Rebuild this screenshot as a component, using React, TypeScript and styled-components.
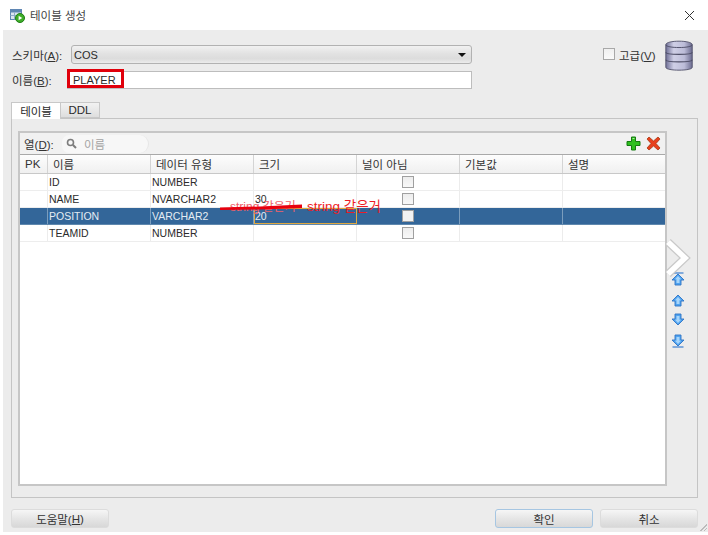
import styled, { createGlobalStyle } from "styled-components";

const GlobalStyle = createGlobalStyle`
  html, body {
    margin: 0;
    padding: 0;
    background: #fff;
  }
  * {
    box-sizing: border-box;
  }
`;

const Root = styled.div`
  position: relative;
  width: 708px;
  height: 535px;
  overflow: hidden;
  background: #fff;
  color: #2b2b2b;
  font-family: "Liberation Sans", "Noto Sans CJK KR", sans-serif;
  font-size: 11px;
`;

const TitleBar = styled.div`
  display: flex;
  align-items: center;
  height: 30px;
  padding: 0 13px 0 10px;
  gap: 5px;
`;

const TitleText = styled.div`
  flex: 1;
  font-size: 11.5px;
  color: #444;
`;

const Body = styled.div`
  display: flex;
  flex-direction: column;
  height: 502px;
  margin-left: 3px;
  padding: 11px 10px 0 8px;
  background: #ececec;
`;

const FormArea = styled.div`
  display: flex;
  height: 58px;
`;

const Fields = styled.div`
  display: flex;
  flex-direction: column;
  gap: 6px;
  padding-top: 4px;
`;

const FieldRow = styled.div`
  display: flex;
  align-items: center;
  height: 19px;
`;

const Label = styled.div`
  width: 60px;
  padding-left: 1px;
  font-size: 11.5px;
  color: #333;
  u {
    text-underline-offset: 1px;
  }
`;

const SelectBox = styled.div`
  display: flex;
  align-items: center;
  justify-content: space-between;
  width: 401px;
  height: 19px;
  padding: 0 5px 0 2px;
  border: 1px solid #b2b2b2;
  border-radius: 3px;
  background: linear-gradient(#f1f1f1, #e2e2e2 45%, #dcdcdc 75%, #ececec);
`;

const Caret = styled.div`
  width: 0;
  height: 0;
  border-left: 4px solid transparent;
  border-right: 4px solid transparent;
  border-top: 4px solid #111;
`;

const TextInput = styled.div`
  display: flex;
  align-items: center;
  width: 405px;
  height: 18px;
  margin-left: -4px;
  padding-left: 5px;
  border: 1px solid #bdbdbd;
  background: #fff;
`;

const AdvancedArea = styled.div`
  display: flex;
  align-items: flex-start;
  margin-left: 131px;
  padding-top: 7px;
`;

const CheckBox = styled.div`
  flex: none;
  width: 12px;
  height: 12px;
  border: 1px solid #a8a8a8;
  background: linear-gradient(#f0f0f0, #fafafa);
`;

const AdvancedLabel = styled.div`
  margin: -1px 8px 0 4px;
  font-size: 11.5px;
  color: #333;
`;

const DatabaseSlot = styled.div`
  margin-top: -8px;
`;

const TabStrip = styled.div`
  display: flex;
  align-items: flex-end;
  height: 19px;
`;

const Tab = styled.div<{ $active?: boolean }>`
  display: flex;
  align-items: center;
  justify-content: center;
  width: ${(p) => (p.$active ? "50px" : "39px")};
  height: ${(p) => (p.$active ? "17px" : "16px")};
  margin-bottom: ${(p) => (p.$active ? "-1px" : "0")};
  border: 1px solid #c8c8c8;
  border-left-width: ${(p) => (p.$active ? "1px" : "0")};
  border-bottom: ${(p) => (p.$active ? "0" : "1px solid #c8c8c8")};
  background: ${(p) => (p.$active ? "#fff" : "linear-gradient(#f2f2f2, #dedede)")};
  font-size: 11.5px;
  position: relative;
  z-index: 1;
`;

const TabPanel = styled.div`
  display: flex;
  height: 380px;
  padding: 12px 0 0 6px;
  border: 1px solid #c4c4c4;
`;

const TablePanel = styled.div`
  display: flex;
  flex-direction: column;
  width: 649px;
  height: 355px;
  border: 2px solid #c6c6c6;
  background: #fff;
`;

const Toolbar = styled.div`
  display: flex;
  flex: none;
  align-items: center;
  height: 22px;
  padding: 0 4px;
  background: #f1f1f1;
  border-bottom: 1px solid #a9a9a9;
`;

const ToolbarLabel = styled.div`
  width: 38px;
  font-size: 11.5px;
  color: #333;
`;

const SearchBox = styled.div`
  display: flex;
  align-items: center;
  gap: 7px;
  width: 87px;
  height: 18px;
  padding-left: 4px;
  background: #f7f7f7;
  border-radius: 7px 9px 9px 7px;
  border-right: 1px solid #e6e6e6;
  color: #a4a4a4;
  font-size: 11.5px;
`;

const ToolbarIcons = styled.div`
  display: flex;
  align-items: center;
  gap: 5px;
  margin-left: auto;
`;

const Row = styled.div<{ $header?: boolean; $selected?: boolean }>`
  display: grid;
  grid-template-columns: 28px 103px 103px 103px 103px 103px 103px;
  height: ${(p) => (p.$header ? "19px" : "17px")};
  flex: none;
  background: ${(p) =>
    p.$header ? "linear-gradient(#fdfdfd, #f0f0f0)" : p.$selected ? "#336699" : "#fff"};
  color: ${(p) => (p.$selected ? "#e4ecf3" : "#2b2b2b")};
  border-bottom: 1px solid ${(p) => (p.$header ? "#c8c8c8" : p.$selected ? "#5f88ae" : "#ededed")};
`;

const Cell = styled.div<{ $center?: boolean }>`
  display: flex;
  align-items: center;
  justify-content: ${(p) => (p.$center ? "center" : "flex-start")};
  padding-left: ${(p) => (p.$center ? "0" : "1px")};
  border-right: 1px solid #ececec;
  font-size: 10.5px;
  white-space: nowrap;
  &:last-child {
    border-right: 0;
  }
`;

const SelectedCell = styled(Cell)`
  border-right-color: #7b9dbd;
`;

const EditingCell = styled(Cell)`
  padding-left: 0;
  border: 1px solid #e0a840;
`;

const HeaderCell = styled(Cell)`
  padding-left: 5px;
  border-right-color: #d4d4d4;
  font-size: 11.5px;
  color: #333;
`;

const RowCheck = styled.div<{ $selected?: boolean }>`
  width: 12px;
  height: 12px;
  border: 1px solid #a0a0a0;
  background: ${(p) => (p.$selected ? "#f2f2f2" : "linear-gradient(#ededed, #f8f8f8)")};
`;

const MoveButtons = styled.div`
  display: flex;
  flex-direction: column;
  gap: 6.5px;
  padding: 141px 0 0 4px;
`;

const Footer = styled.div`
  display: flex;
  align-items: center;
  gap: 7px;
  padding-top: 11px;
`;

const FooterButton = styled.div<{ $primary?: boolean; $push?: boolean }>`
  display: flex;
  flex: none;
  align-items: center;
  justify-content: center;
  width: 98px;
  height: 19px;
  margin-left: ${(p) => (p.$push ? "379px" : "0")};
  border: 1px solid ${(p) => (p.$primary ? "#a6c6e2" : "#dcdcdc")};
  border-radius: 3px;
  background: linear-gradient(#f6f6f6, #e4e4e4 55%, #d8d8d8);
  font-size: 11.5px;
  color: #333;
`;

const ResizeGrip = styled.div`
  position: absolute;
  right: 1px;
  bottom: 4px;
  width: 7px;
  height: 7px;
  background: linear-gradient(135deg, transparent 50%, #bbb 50%, #bbb 60%, transparent 60%, transparent 75%, #bbb 75%, #bbb 85%, transparent 85%);
`;

// annotations drawn over the dialog in the screenshot
const NameHighlight = styled.div`
  position: absolute;
  left: 67px;
  top: 69px;
  width: 57px;
  height: 19px;
  border: 3px solid #e0000b;
`;

const RedNote = styled.div`
  position: absolute;
  left: 307px;
  top: 195px;
  color: #ee1c25;
  font-size: 13.5px;
  white-space: nowrap;
`;

const CrossedNote = styled.div`
  position: absolute;
  left: 230px;
  top: 197px;
  color: #f0606a;
  font-size: 12px;
  white-space: nowrap;
`;

const Overlay = styled.svg`
  position: absolute;
  left: 0;
  top: 0;
  pointer-events: none;
`;

const TableIcon = () => (
  <svg width="15" height="15" viewBox="0 0 15 15">
    <rect x="0.5" y="1.5" width="11" height="10" fill="#dce6f2" stroke="#5f86b3" />
    <rect x="1" y="2" width="10" height="2.5" fill="#5f86b3" />
    <path d="M0.5 7.5h11M4.5 4.5v7" stroke="#8fabc9" />
    <circle cx="10" cy="10" r="4.5" fill="#3fae2a" stroke="#1f7d16" />
    <path d="M8.6 7.7v4.6l3.6-2.3z" fill="#fff" />
  </svg>
);

const CloseIcon = () => (
  <svg width="11" height="11" viewBox="0 0 11 11">
    <path d="M1 1l9 9M10 1l-9 9" stroke="#333" strokeWidth="1" fill="none" />
  </svg>
);

const DatabaseIcon = () => (
  <svg width="31" height="33" viewBox="0 0 31 35">
    <defs>
      <linearGradient id="dbBody" x1="0" x2="1" y1="0" y2="0">
        <stop offset="0" stopColor="#6f6f96" />
        <stop offset="0.3" stopColor="#cfcfe6" />
        <stop offset="0.7" stopColor="#bcbcd8" />
        <stop offset="1" stopColor="#6c6c90" />
      </linearGradient>
    </defs>
    <path d="M1 5c0-5 28-5 28 0v24c0 4-28 4-28 0z" fill="url(#dbBody)" stroke="#55556f" />
    <path d="M1 5c0 4 28 4 28 0" fill="none" stroke="#4f4f68" />
    <path d="M1 13c0 3 28 3 28 0M1 21c0 3 28 3 28 0" fill="none" stroke="#4f4f68" strokeWidth="1.2" />
  </svg>
);

const SearchIcon = () => (
  <svg width="11" height="11" viewBox="0 0 11 11">
    <circle cx="4.5" cy="4.5" r="3" fill="none" stroke="#7d7d7d" strokeWidth="1.6" />
    <path d="M7 7l3 3" stroke="#7d7d7d" strokeWidth="2" />
  </svg>
);

const PlusIcon = () => (
  <svg width="15" height="15" viewBox="0 0 15 15">
    <path d="M5.500 1h4v4.500H14v4H9.500V14h-4V9.500H1v-4h4.500z" fill="#2fbf1f" stroke="#157a10" />
    <path d="M6.500 2.500h2" stroke="#a6ef9a" />
  </svg>
);

const DeleteIcon = () => (
  <svg width="15" height="15" viewBox="0 0 15 15">
    <path d="M1 3l2-2 4.500 4 4.500-4 2 2-4 4.500 4 4.500-2 2-4.500-4-4.500 4-2-2 4-4.500z" fill="#e8401c" stroke="#a83a14" strokeWidth="0.8" />
  </svg>
);

const MoveArrow = ({ down, bar }: { down?: boolean; bar?: boolean }) => (
  <svg width="14" height="14" viewBox="0 0 14 14">
    <g transform={down ? "rotate(180 7 7)" : undefined}>
      {bar && <path d="M1.500 1h11" stroke="#3b7fd0" strokeWidth="1.2" />}
      <path d="M7 2L13 8H10V13H4V8H1z" fill="#4fa3f0" stroke="#2f74c4" strokeWidth="0.9" />
      <path d="M7 4L10 7.300H8.500V11H5.500V7.300H4z" fill="#a6d5fb" />
    </g>
  </svg>
);

const columnsData = [
  { name: "ID", type: "NUMBER", size: "" },
  { name: "NAME", type: "NVARCHAR2", size: "30" },
  { name: "POSITION", type: "VARCHAR2", size: "20" },
  { name: "TEAMID", type: "NUMBER", size: "" },
];

const headers = ["PK", "이름", "데이터 유형", "크기", "널이 아님", "기본값", "설명"];

export default function App() {
  return (
    <Root>
      <GlobalStyle />
      <TitleBar>
        <TableIcon />
        <TitleText>테이블 생성</TitleText>
        <CloseIcon />
      </TitleBar>
      <Body>
        <FormArea>
          <Fields>
            <FieldRow>
              <Label>
                스키마(<u>A</u>):
              </Label>
              <SelectBox>
                COS
                <Caret />
              </SelectBox>
            </FieldRow>
            <FieldRow>
              <Label>
                이름(<u>B</u>):
              </Label>
              <TextInput>PLAYER</TextInput>
            </FieldRow>
          </Fields>
          <AdvancedArea>
            <CheckBox />
            <AdvancedLabel>
              고급(<u>V</u>)
            </AdvancedLabel>
            <DatabaseSlot>
              <DatabaseIcon />
            </DatabaseSlot>
          </AdvancedArea>
        </FormArea>
        <TabStrip>
          <Tab $active>테이블</Tab>
          <Tab>DDL</Tab>
        </TabStrip>
        <TabPanel>
          <TablePanel>
            <Toolbar>
              <ToolbarLabel>
                열(<u>D</u>):
              </ToolbarLabel>
              <SearchBox>
                <SearchIcon />
                이름
              </SearchBox>
              <ToolbarIcons>
                <PlusIcon />
                <DeleteIcon />
              </ToolbarIcons>
            </Toolbar>
            <Row $header>
              {headers.map((h) => (
                <HeaderCell key={h}>{h}</HeaderCell>
              ))}
            </Row>
            {columnsData.map((c) => {
              const selected = c.name === "POSITION";
              const C = selected ? SelectedCell : Cell;
              const SizeCell = selected ? EditingCell : Cell;
              return (
                <Row key={c.name} $selected={selected}>
                  <C />
                  <C>{c.name}</C>
                  <C>{c.type}</C>
                  <SizeCell>{c.size}</SizeCell>
                  <C $center>
                    <RowCheck $selected={selected} />
                  </C>
                  <C />
                  <C />
                </Row>
              );
            })}
          </TablePanel>
          <MoveButtons>
            <MoveArrow bar />
            <MoveArrow />
            <MoveArrow down />
            <MoveArrow down bar />
          </MoveButtons>
        </TabPanel>
        <Footer>
          <FooterButton>
            도움말(<u>H</u>)
          </FooterButton>
          <FooterButton $primary $push>
            확인
          </FooterButton>
          <FooterButton>취소</FooterButton>
        </Footer>
      </Body>
      <ResizeGrip />
      <NameHighlight />
      <CrossedNote>string 같은거</CrossedNote>
      <RedNote>string 같은거</RedNote>
      <Overlay width="708" height="535" viewBox="0 0 708 535">
        <path d="M220 207.500L260 206.500L302 204.500L302 208L260 209.500L220 210z" fill="#e8000e" />
        <path d="M668 242L685 258L668 274" stroke="#c9c9c9" strokeWidth="8" fill="none" />
        <path d="M668 242L685 258L668 274" stroke="#fff" strokeWidth="5.500" fill="none" />
      </Overlay>
    </Root>
  );
}
